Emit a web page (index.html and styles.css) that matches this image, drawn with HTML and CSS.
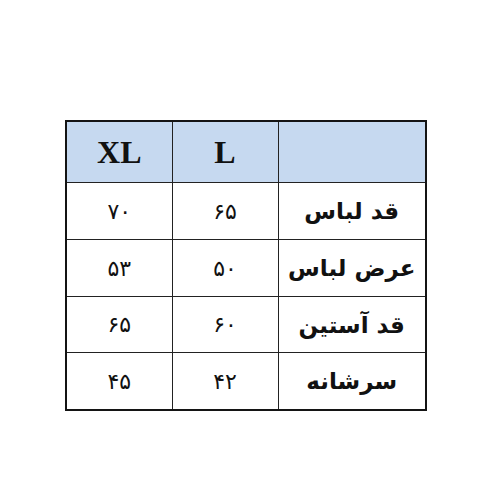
FILE: index.html
```html
<!DOCTYPE html>
<html lang="fa">
<head>
<meta charset="utf-8">
<link rel="stylesheet" href="styles.css">
</head>
<body>
<table class="size-table" dir="rtl">
  <colgroup>
    <col class="c-label">
    <col class="c-size">
    <col class="c-size">
  </colgroup>
  <thead>
    <tr class="head">
      <th></th>
      <th class="sz">L</th>
      <th class="sz">XL</th>
    </tr>
  </thead>
  <tbody>
    <tr class="r1"><td class="label">قد لباس</td><td class="num">۶۵</td><td class="num">۷۰</td></tr>
    <tr class="r2"><td class="label">عرض لباس</td><td class="num">۵۰</td><td class="num">۵۳</td></tr>
    <tr class="r3"><td class="label">قد آستین</td><td class="num">۶۰</td><td class="num">۶۵</td></tr>
    <tr class="r4"><td class="label">سرشانه</td><td class="num">۴۲</td><td class="num">۴۵</td></tr>
  </tbody>
</table>
</body>
</html>
```
FILE: styles.css
```css
html, body {
  margin: 0;
  padding: 0;
  background: #ffffff;
}
body {
  padding-top: 120px;
  padding-left: 65px;
}
.size-table {
  border-collapse: collapse;
  border: 2px solid #141414;
  table-layout: fixed;
  width: 362px;
}
.c-label { width: 148px; }
.c-size { width: 106px; }
.size-table th,
.size-table td {
  border: 1px solid #222222;
  padding: 0;
  text-align: center;
  vertical-align: middle;
  color: #111111;
}
.head th {
  background: #c6d9f0;
  height: 60px;
}
.sz {
  font-family: "Liberation Serif", serif;
  font-weight: bold;
  font-size: 32px;
}
.r1 td { height: 56px; }
.r2 td { height: 56px; }
.r3 td { height: 55px; }
.r4 td { height: 56px; }
.label {
  font-family: "DejaVu Sans", sans-serif;
  font-weight: bold;
  font-size: 23px;
}
.num {
  font-family: "DejaVu Sans", sans-serif;
  font-size: 22px;
}
```
